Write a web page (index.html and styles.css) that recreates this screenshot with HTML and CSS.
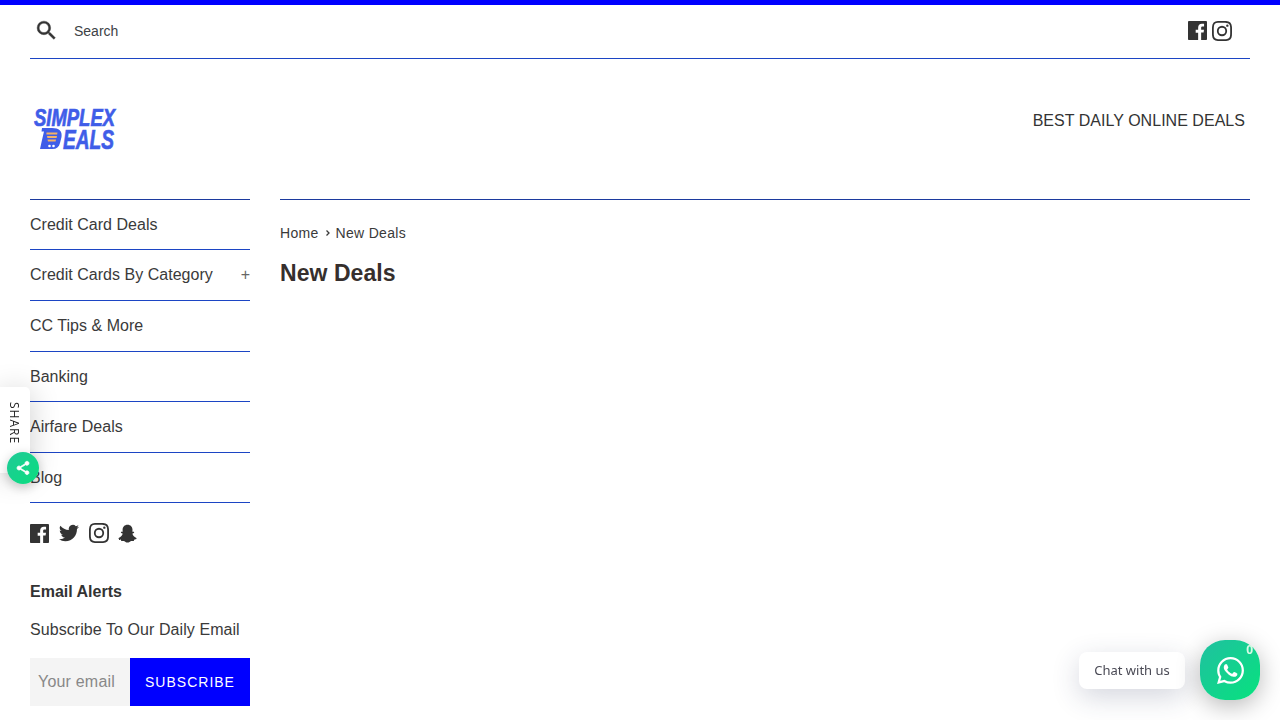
FILE: index.html
```html
<!DOCTYPE html>
<html lang="en">
<head>
<meta charset="utf-8">
<title>New Deals – Simplex Deals</title>
<link rel="stylesheet" href="styles.css">
</head>
<body>
<div class="page">
  <div class="topbar">
    <div class="search">
      <svg class="search-icon" viewBox="0 0 24 24"><path d="M15.5 14h-.79l-.28-.27A6.47 6.47 0 0 0 16 9.5 6.5 6.5 0 1 0 9.5 16c1.61 0 3.09-.59 4.23-1.57l.27.28v.79l5 4.99L20.49 19l-4.99-5zm-6 0C7.01 14 5 11.99 5 9.5S7.01 5 9.5 5 14 7.01 14 9.5 11.99 14 9.500 14z"/></svg>
      <span class="search-label">Search</span>
    </div>
    <div class="social top-social">
      <svg class="ico ico-fb" viewBox="0 0 24 24"><path d="M22.700 0H1.300C.6 0 0 .6 0 1.300v21.400C0 23.400.6 24 1.300 24h11.500v-9.300H9.700v-3.600h3.100V8.400c0-3.100 1.900-4.800 4.700-4.800 1.300 0 2.500.1 2.800.1v3.200h-1.900c-1.500 0-1.800.7-1.800 1.800v2.300h3.600l-.5 3.600h-3.100V24h6.100c.7 0 1.300-.6 1.300-1.300V1.300C24 .6 23.400 0 22.700 0z"/></svg>
      <svg class="ico" viewBox="0 0 24 24"><path d="M12 2.200c3.200 0 3.600 0 4.850.07 3.250.15 4.770 1.700 4.920 4.920.06 1.260.07 1.640.07 4.850s0 3.580-.07 4.850c-.15 3.220-1.660 4.770-4.920 4.920-1.270.06-1.640.07-4.850.07s-3.580 0-4.850-.07c-3.260-.15-4.770-1.700-4.920-4.920C2.170 15.580 2.160 15.200 2.160 12s0-3.600.07-4.850c.15-3.220 1.660-4.770 4.920-4.920C8.420 2.170 8.800 2.160 12 2.160zM12 0C8.740 0 8.330 0 7.050.07 2.700.27.27 2.700.07 7.050 0 8.330 0 8.740 0 12s0 3.670.07 4.950c.2 4.360 2.620 6.780 6.980 6.980C8.330 24 8.740 24 12 24s3.670 0 4.950-.07c4.350-.2 6.780-2.620 6.980-6.980C24 15.670 24 15.260 24 12s0-3.670-.07-4.950C23.730 2.700 21.300.27 16.950.07 15.670 0 15.260 0 12 0zm0 5.840a6.160 6.160 0 1 0 0 12.320 6.160 6.160 0 0 0 0-12.320zM12 16a4 4 0 1 1 0-8 4 4 0 0 1 0 8zm6.400-11.850a1.440 1.440 0 1 0 0 2.880 1.440 1.440 0 0 0 0-2.880z"/></svg>
    </div>
  </div>

  <header class="masthead">
    <svg class="logo" viewBox="0 0 100 46" role="img" aria-label="Simplex Deals">
      <text class="logo-line logo-top" x="1" y="19" textLength="81" lengthAdjust="spacingAndGlyphs">SIMPLEX</text>
      <text class="logo-line logo-bottom" x="30" y="41.500" textLength="51" lengthAdjust="spacingAndGlyphs">EALS</text>
      <path class="logo-cart" d="M9 21h10c7 0 10.500 3 9.500 9l-1.500 6c-1 4-3.500 6-7.500 6H7l2-9 2-8.500H8.500z"/>
      <path class="logo-rows" d="M13.500 25.500h11l-.4 2H13.400zM14 29h10l-.4 2h-9.200zM14.500 32.500h8.500l-.4 2H15z"/>
      <circle class="logo-dot" cx="16.500" cy="39" r="1.300"/>
      <circle class="logo-dot" cx="20.500" cy="39" r="1.300"/>
    </svg>
    <p class="tagline">BEST DAILY ONLINE DEALS</p>
  </header>

  <div class="columns">
    <aside class="sidebar">
      <nav class="menu">
        <a class="menu-item">Credit Card Deals</a>
        <a class="menu-item">Credit Cards By Category<span class="plus">+</span></a>
        <a class="menu-item">CC Tips &amp; More</a>
        <a class="menu-item">Banking</a>
        <a class="menu-item">Airfare Deals</a>
        <a class="menu-item">Blog</a>
      </nav>
      <div class="social side-social">
        <svg class="ico ico-fb" viewBox="0 0 24 24"><path d="M22.700 0H1.300C.6 0 0 .6 0 1.300v21.400C0 23.400.6 24 1.300 24h11.500v-9.300H9.700v-3.600h3.100V8.400c0-3.100 1.900-4.800 4.700-4.800 1.300 0 2.500.1 2.800.1v3.200h-1.900c-1.500 0-1.800.7-1.800 1.800v2.300h3.600l-.5 3.600h-3.100V24h6.100c.7 0 1.300-.6 1.300-1.300V1.300C24 .6 23.400 0 22.700 0z"/></svg>
        <svg class="ico" viewBox="0 0 24 24"><path d="M24 4.560a9.830 9.830 0 0 1-2.830.78 4.940 4.940 0 0 0 2.170-2.720 9.860 9.860 0 0 1-3.130 1.190 4.920 4.920 0 0 0-8.390 4.490A13.980 13.980 0 0 1 1.670 3.150a4.930 4.930 0 0 0 1.520 6.570 4.900 4.900 0 0 1-2.230-.62c-.05 2.280 1.580 4.410 3.950 4.890a4.930 4.930 0 0 1-2.220.08 4.930 4.930 0 0 0 4.600 3.420A9.900 9.900 0 0 1 0 19.540 13.940 13.940 0 0 0 7.550 21.750c9.140 0 14.310-7.720 14-14.650A10.030 10.030 0 0 0 24 4.560z"/></svg>
        <svg class="ico" viewBox="0 0 24 24"><path d="M12 2.200c3.200 0 3.600 0 4.850.07 3.250.15 4.770 1.700 4.920 4.920.06 1.260.07 1.640.07 4.850s0 3.580-.07 4.850c-.15 3.220-1.660 4.770-4.920 4.920-1.270.06-1.640.07-4.850.07s-3.580 0-4.850-.07c-3.260-.15-4.770-1.700-4.920-4.920C2.170 15.580 2.160 15.200 2.160 12s0-3.600.07-4.850c.15-3.220 1.660-4.770 4.920-4.920C8.420 2.170 8.800 2.160 12 2.160zM12 0C8.740 0 8.330 0 7.050.07 2.700.27.27 2.700.07 7.050 0 8.330 0 8.740 0 12s0 3.670.07 4.950c.2 4.360 2.620 6.780 6.980 6.980C8.330 24 8.740 24 12 24s3.670 0 4.950-.07c4.350-.2 6.780-2.620 6.980-6.980C24 15.670 24 15.260 24 12s0-3.670-.07-4.950C23.730 2.700 21.300.27 16.950.07 15.670 0 15.260 0 12 0zm0 5.840a6.160 6.160 0 1 0 0 12.320 6.160 6.160 0 0 0 0-12.320zM12 16a4 4 0 1 1 0-8 4 4 0 0 1 0 8zm6.400-11.850a1.440 1.440 0 1 0 0 2.880 1.440 1.440 0 0 0 0-2.880z"/></svg>
        <svg class="ico ico-snap" viewBox="0 0 24 24"><path d="M12.100 1.500c-3.900 0-6.300 2.700-6.300 6.200 0 .9.100 1.800.1 2.600-.5.300-1.300-.2-1.800.1-.7.400-.5 1.200.1 1.500.6.300 1.500.5 1.600 1.200.1 1.200-2.500 4.400-4.400 4.900-.7.200-1 .7-.6 1.300.5.800 2.200.9 2.800 1.200.4.400.1 1.400.7 1.600.9.300 2-.3 3.300 0 1.500.400 2.300 2 4.400 2 2.200 0 3-1.600 4.500-2 1.300-.3 2.400.3 3.300 0 .6-.2.300-1.200.7-1.600.6-.3 2.300-.4 2.800-1.200.4-.6.100-1.100-.6-1.300-1.900-.5-4.500-3.700-4.400-4.900.1-.7 1-.9 1.600-1.200.6-.3.800-1.100.1-1.500-.5-.3-1.300.2-1.800-.1 0-.8.100-1.700.1-2.600 0-3.500-2.400-6.200-6.200-6.200z"/></svg>
      </div>
      <section class="signup">
        <h3 class="signup-title">Email Alerts</h3>
        <p class="signup-text">Subscribe To Our Daily Email</p>
        <form class="signup-form">
          <input class="signup-input" type="email" placeholder="Your email">
          <button class="signup-button" type="button">SUBSCRIBE</button>
        </form>
      </section>
    </aside>
    <main class="content">
      <nav class="crumbs"><a>Home</a><svg class="chev" viewBox="0 0 8 8"><path d="M2.500 1.500 5 4 2.500 6.500"/></svg><span>New Deals</span></nav>
      <h1 class="title">New Deals</h1>
    </main>
  </div>
</div>

<div class="share">
  <span class="share-label">SHARE</span>
  <span class="share-btn">
    <svg viewBox="0 0 24 24"><path d="M18 16.100c-.8 0-1.500.3-2 .8l-7.100-4.200c.1-.2.100-.5.100-.7s0-.5-.1-.7l7-4.100c.5.500 1.300.8 2.100.8 1.700 0 3-1.300 3-3s-1.300-3-3-3-3 1.300-3 3c0 .2 0 .5.100.7l-7 4.100C7.500 9.300 6.800 9 6 9c-1.700 0-3 1.300-3 3s1.300 3 3 3c.8 0 1.500-.3 2.100-.8l7.100 4.200c-.1.200-.1.400-.1.600 0 1.600 1.300 2.900 2.900 2.900s2.900-1.300 2.900-2.900-1.300-2.900-2.900-2.900z"/></svg>
  </span>
</div>

<div class="chat">
  <span class="chat-label">Chat with us</span>
  <span class="chat-btn">
    <svg viewBox="0 0 24 24"><path d="M17.470 14.380c-.3-.15-1.760-.87-2.030-.97-.27-.1-.47-.15-.67.15-.2.3-.77.97-.94 1.160-.17.2-.35.220-.64.070-.3-.15-1.260-.46-2.390-1.470-.88-.79-1.480-1.760-1.650-2.060-.17-.3-.02-.46.130-.61.130-.13.3-.35.450-.520.150-.17.2-.3.300-.5.100-.2.050-.37-.020-.52-.080-.15-.67-1.620-.920-2.210-.24-.58-.49-.5-.67-.51h-.570c-.2 0-.52.070-.79.370-.27.3-1.040 1.020-1.040 2.480s1.060 2.880 1.210 3.080c.15.2 2.100 3.200 5.080 4.480.71.310 1.260.49 1.690.63.710.22 1.360.19 1.870.120.570-.080 1.760-.72 2.010-1.420.25-.69.250-1.290.170-1.420-.070-.12-.270-.2-.570-.35zM12.050 21.790h-.010a9.870 9.870 0 0 1-5.030-1.380l-.36-.21-3.740.98 1-3.650-.24-.37a9.860 9.860 0 0 1-1.510-5.260c0-5.450 4.440-9.880 9.890-9.880 2.640 0 5.120 1.030 6.990 2.900a9.830 9.830 0 0 1 2.890 6.990c0 5.450-4.440 9.880-9.880 9.880zM20.460 3.490A11.820 11.820 0 0 0 12.050 0C5.500 0 .16 5.340.16 11.890c0 2.090.55 4.140 1.590 5.950L.06 24l6.310-1.650a11.880 11.880 0 0 0 5.680 1.450h.01c6.550 0 11.890-5.340 11.890-11.890 0-3.180-1.240-6.160-3.490-8.420z"/></svg>
    <span class="chat-count">0</span>
  </span>
</div>
</body>
</html>
```

FILE: styles.css
```css
* { box-sizing: border-box; }
html, body { margin: 0; padding: 0; }
body {
  background: #fff;
  color: #3a3a3a;
  font-family: "Liberation Sans", Arial, sans-serif;
  font-size: 16px;
  height: 720px;
  overflow: hidden;
}
.page {
  border-top: 5px solid #0000ff;
  padding: 0 30px;
}
.topbar {
  display: flex;
  justify-content: space-between;
  align-items: center;
  height: 54px;
  border-bottom: 1px solid #1c45c4;
}
.search { display: flex; align-items: center; padding-bottom: 2px; }
.search-icon { width: 25px; height: 25px; margin-left: 4px; fill: #333; stroke: #333; stroke-width: .4; }
.search-label { font-size: 14px; margin-left: 15px; color: #3d4246; }
.social { display: flex; fill: #333; }
.ico { display: block; width: 20px; height: 20px; }
.ico-fb { width: 19px; height: 19px; margin: .5px .5px .5px 0; }
.ico-snap { width: 19px; }
.top-social { gap: 4.500px; margin-right: 18px; padding-bottom: 2px; }
.masthead {
  display: flex;
  justify-content: space-between;
  height: 139.800px;
}
.logo { display: block; width: 100px; height: 46px; margin: 48px 0 0 3px; }
.logo-line {
  font-family: "Liberation Sans Narrow", "Liberation Sans", sans-serif;
  font-weight: 700;
  font-style: italic;
  fill: #3f5de8;
  stroke: #3f5de8;
  stroke-width: .7;
}
.logo-top { font-size: 24px; }
.logo-bottom { font-size: 27px; }
.logo-cart { fill: #3f5de8; }
.logo-rows { fill: #f4b266; }
.logo-dot { fill: #fff; }
.tagline { margin: 52px 5px 0 0; font-size: 16px; line-height: 20px; letter-spacing: .03px; color: #333; }
.columns { display: flex; gap: 30px; }
.sidebar { width: 220px; flex: none; }
.menu { border-top: 1px solid #1c3a9e; }
.menu-item {
  display: flex;
  justify-content: space-between;
  align-items: center;
  height: 50.600px;
  padding-top: .3px;
  border-bottom: 1px solid #1c45c4;
  font-size: 16px;
  letter-spacing: .02px;
  color: #3a3a3a;
}
.plus { font-size: 16px; color: #666; }
.side-social { gap: 9.500px; margin-top: 20px; }
.signup-title { margin: 39px 0 0; font-size: 16px; line-height: 20px; font-weight: 700; color: #333; }
.signup-text { margin: 18px 0 0; font-size: 16px; line-height: 20px; letter-spacing: .07px; }
.signup-form { display: flex; margin-top: 18px; height: 48px; }
.signup-input {
  width: 100px;
  min-width: 0;
  border: 0;
  background: #f4f4f4;
  padding: 0 8px;
  font: 16px "Liberation Sans", sans-serif;
  letter-spacing: .2px;
  color: #333;
}
.signup-input::placeholder { color: #888; opacity: 1; }
.signup-button {
  width: 120px;
  border: 0;
  background: #0000ff;
  color: #fff;
  font: 14px "Liberation Sans", sans-serif;
  letter-spacing: 1px;
}
.content { flex: 1; min-width: 0; border-top: 1px solid #1c3a9e; }
.crumbs { display: flex; align-items: center; margin-top: 24px; font-size: 14px; line-height: 18px; letter-spacing: .3px; color: #3a3a3a; }
.chev { width: 8px; height: 8px; margin: 0 4px 0 5px; fill: none; stroke: #3a3a3a; stroke-width: 1.300; }
.title { margin: 17px 0 0; font-size: 23px; line-height: 28px; font-weight: 700; letter-spacing: .05px; color: #362f2d; }

.share {
  position: fixed;
  left: 0;
  top: 387px;
  width: 30px;
  height: 86px;
  background: #fff;
  border-radius: 0 5px 5px 0;
  box-shadow: 0 4px 30px rgba(0, 0, 0, .2);
}
.share-label {
  position: absolute;
  left: 6px;
  top: 15px;
  writing-mode: vertical-rl;
  font: 12px "Open Sans", sans-serif;
  letter-spacing: 1px;
  color: #222;
}
.share-btn {
  position: absolute;
  left: 7px;
  top: 65px;
  width: 32px;
  height: 32px;
  border-radius: 50%;
  background: linear-gradient(135deg, #20c997, #0ade7f);
  box-shadow: 0 3px 12px rgba(0, 0, 0, .22);
  display: flex;
  align-items: center;
  justify-content: center;
}
.share-btn svg { width: 16px; height: 16px; fill: #fff; stroke: #fff; stroke-width: 1; }

.chat {
  position: fixed;
  right: 20px;
  bottom: 20px;
  display: flex;
  align-items: center;
  gap: 15px;
}
.chat-label {
  width: 106px;
  height: 37px;
  background: #fff;
  border-radius: 8px;
  box-shadow: 0 8px 28px rgba(40, 50, 90, .2);
  font: 13px/37px "Noto Sans", sans-serif;
  color: #4a4a55;
  text-align: center;
}
.chat-btn {
  position: relative;
  width: 60px;
  height: 60px;
  border-radius: 25px;
  background: linear-gradient(135deg, #20c0a0, #07e27e);
  box-shadow: 0 6px 24px rgba(0, 0, 0, .28);
  display: flex;
  align-items: center;
  justify-content: center;
}
.chat-btn svg { width: 27px; height: 27px; fill: #fff; }
.chat-count {
  position: absolute;
  top: 1px;
  right: 7px;
  font: 700 12px/18px "Noto Sans", sans-serif;
  color: #d8fbe6;
}
```
